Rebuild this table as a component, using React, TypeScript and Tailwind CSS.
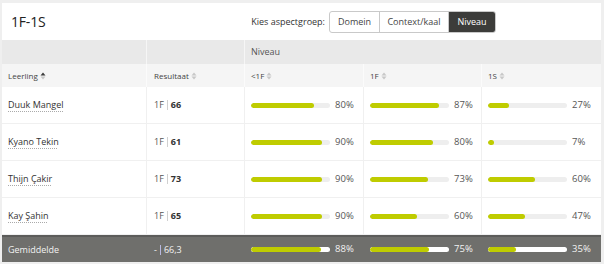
import { ReactNode } from "react";

const rows = [
  { name: "Duuk Mangel", score: 66, a: 80, b: 87, c: 27 },
  { name: "Kyano Tekin", score: 61, a: 90, b: 80, c: 7 },
  { name: "Thijn Çakir", score: 73, a: 90, b: 73, c: 60 },
  { name: "Kay Şahin", score: 65, a: 90, b: 60, c: 47 },
];

const cols = "grid grid-cols-[145px_98px_119px_118px_1fr]";

function SortIcon({ active }: { active?: boolean }) {
  return (
    <svg width="6" height="8" viewBox="0 0 6 8" className="ml-[2px] inline-block">
      <path d="M0.5 3.4 L3 0.6 L5.5 3.4 Z" fill={active ? "#3b3b3b" : "#c8c8c8"} />
      <path d="M0.5 4.6 L3 7.4 L5.5 4.6 Z" fill="#c8c8c8" />
    </svg>
  );
}

function Bar({ pct, avg }: { pct: number; avg?: boolean }) {
  return (
    <div className="flex items-center pl-[6px]">
      <div className={`h-[5px] w-[79px] rounded-full overflow-hidden ${avg ? "bg-white" : "bg-[#eeeeee]"}`}>
        <div className="h-full rounded-full bg-[#bfcc00]" style={{ width: `${pct}%` }} />
      </div>
      <span className={`ml-[5px] text-[9.5px] ${avg ? "text-[#f2f2f2]" : "text-[#555555]"}`}>{pct}%</span>
    </div>
  );
}

function Cell({ children, last }: { children: ReactNode; last?: boolean }) {
  return (
    <div className={`flex items-center h-full ${last ? "" : "border-r border-[#f0f0f0]"}`}>{children}</div>
  );
}

export default function App() {
  return (
    <div
      className="w-[604px] h-[264px] bg-[#efefef] pt-[3px] pl-[2px] pr-[3px] text-[#333333]"
      style={{ fontFamily: "'Open Sans', 'Noto Sans', sans-serif" }}
    >
      <div className="bg-white">
        <div className="flex items-center justify-between h-[37px] pl-[9px] pr-[105px]">
          <h1 className="text-[14px] text-[#222222] tracking-[-0.2px]">1F-1S</h1>
          <div className="flex items-center">
            <span className="text-[9px] text-[#333333] mr-[4px]">Kies aspectgroep:</span>
            <div className="flex h-[22px] border border-[#c9c9c9] rounded-[3px] overflow-hidden text-[9px]">
              <button className="w-[50px] text-[#444444] border-r border-[#c9c9c9]">Domein</button>
              <button className="w-[69px] text-[#444444] border-r border-[#c9c9c9]">Context/kaal</button>
              <button className="w-[46px] bg-[#3c3c3a] text-white">Niveau</button>
            </div>
          </div>
        </div>

        <div className={`${cols} h-[24px] bg-[#e9e9e9] text-[9px] text-[#555555]`}>
          <div className="border-r border-[#f6f6f6]" />
          <div className="border-r border-[#f6f6f6]" />
          <div className="col-span-3 flex items-center pl-[6px]">Niveau</div>
        </div>

        <div className={`${cols} h-[23px] bg-[#f5f5f5] text-[8px] text-[#444444]`}>
          <div className="flex items-center pl-[6px] border-r border-[#fbfbfb]">
            Leerling
            <SortIcon active />
          </div>
          <div className="flex items-center pl-[7px] border-r border-[#fbfbfb]">
            Resultaat
            <SortIcon />
          </div>
          <div className="flex items-center pl-[6px] border-r border-[#fbfbfb]">
            &lt;1F
            <SortIcon />
          </div>
          <div className="flex items-center pl-[6px] border-r border-[#fbfbfb]">
            1F
            <SortIcon />
          </div>
          <div className="flex items-center pl-[6px]">
            1S
            <SortIcon />
          </div>
        </div>

        {rows.map((r) => (
          <div key={r.name} className={`${cols} h-[37px] border-b border-[#f0f0f0] text-[9px]`}>
            <Cell>
              <span className="pl-[6px] text-[#333333] underline decoration-dotted decoration-[#aaaaaa] underline-offset-[3px]">
                {r.name}
              </span>
            </Cell>
            <Cell>
              <span className="pl-[7px] flex items-center">
                <span className="text-[#555555]">1F</span>
                <span className="mx-[3px] h-[10px] border-l border-[#d0d0d0]" />
                <span className="font-bold text-[#333333]">{r.score}</span>
              </span>
            </Cell>
            <Cell>
              <Bar pct={r.a} />
            </Cell>
            <Cell>
              <Bar pct={r.b} />
            </Cell>
            <Cell last>
              <Bar pct={r.c} />
            </Cell>
          </div>
        ))}

        <div className={`${cols} h-[27px] bg-[#6f6f6c] border-t-2 border-[#5c5c5a] text-[9px] text-[#f2f2f2]`}>
          <div className="flex items-center pl-[6px]">Gemiddelde</div>
          <div className="flex items-center pl-[7px]">
            -<span className="mx-[3px] h-[10px] border-l border-[#b8b8e0]" />66,3
          </div>
          <Bar pct={88} avg />
          <Bar pct={75} avg />
          <Bar pct={35} avg />
        </div>
      </div>
    </div>
  );
}
